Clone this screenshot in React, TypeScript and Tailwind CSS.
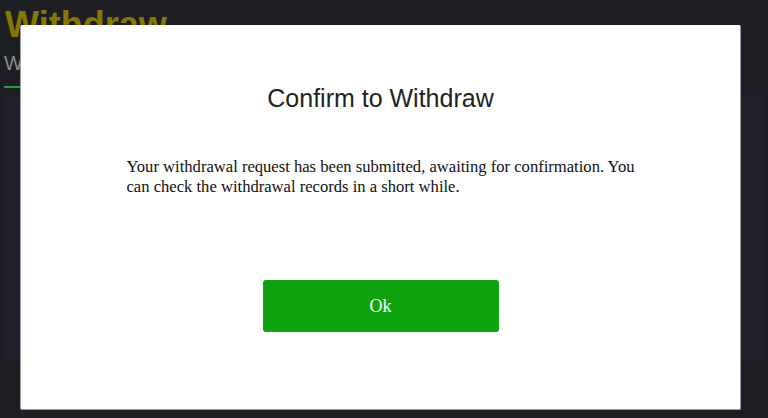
const App = () => {
  return (
    <div className="relative w-[768px] h-[418px] overflow-hidden bg-[#1d1e23]">
      {/* PAGE BEHIND */}
      <div className="px-1 pt-[3px]">
        <h1 className="pl-[1px] text-[36px] leading-[44px] font-bold text-[#847900] font-['Liberation_Sans',Arial,sans-serif]">
          Withdraw
        </h1>
        <div className="flex mt-[2px]">
          <div className="flex flex-col">
            <span className="text-[20px] leading-[26px] text-[#8b8b92] font-['Liberation_Sans',Arial,sans-serif] pt-[1px]">
              Withdraw
            </span>
            <div className="mt-[10px] h-[2px] w-[90px] bg-[#2a9e2a]" />
          </div>
        </div>
        <div className="mt-[8px] h-[265px] bg-[#202129]" />
      </div>

      {/* MODAL */}
      <div className="absolute inset-0 flex">
        <div className="ml-[20px] mt-[25px] w-[721px] h-[385px] bg-white rounded-[2px] border-r border-b border-l border-[#a0a0a4] flex flex-col items-center">
          <h2 className="mt-[59px] text-[25px] leading-[28px] text-[#222] font-['Liberation_Sans',Arial,sans-serif]">
            Confirm to Withdraw
          </h2>
          <p className="mt-[45px] w-[512px] pl-[2px] text-[16.6px] leading-[20px] text-[#111] font-['Liberation_Serif','Times_New_Roman',serif]">
            Your withdrawal request has been submitted, awaiting for confirmation. You can check the withdrawal records in a short while.
          </p>
          <button className="mt-[83px] w-[236px] h-[52px] rounded-[3px] bg-[#10a310] text-white text-[18px] font-['Liberation_Serif','Times_New_Roman',serif]">
            Ok
          </button>
        </div>
      </div>
    </div>
  )
}

export default App
